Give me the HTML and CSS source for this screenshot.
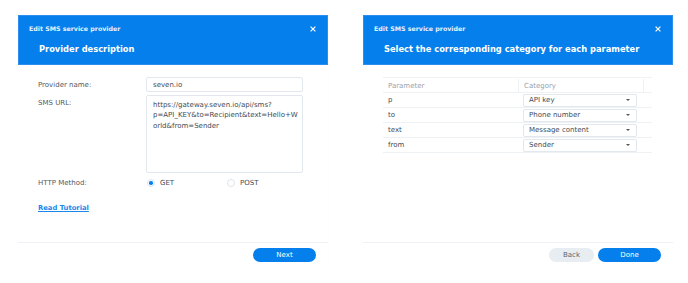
FILE: index.html
```html
<!DOCTYPE html>
<html>
<head>
<meta charset="utf-8">
<link rel="stylesheet" href="styles.css">
</head>
<body>
<div class="page">
  <div class="dialog">
    <div class="header">
      <div class="topbar">
        <span class="small-title">Edit SMS service provider</span>
        <svg class="close" viewBox="0 0 10 10" width="7" height="7"><path d="M1 1L9 9M9 1L1 9" stroke="#fff" stroke-width="2"/></svg>
      </div>
      <div class="big-title">Provider description</div>
    </div>
    <div class="body form">
      <div class="row">
        <div class="label">Provider name:</div>
        <div class="input">seven.io</div>
      </div>
      <div class="row">
        <div class="label">SMS URL:</div>
        <div class="textarea">https://gateway.seven.io/api/sms?<br>p=API_KEY&amp;to=Recipient&amp;text=Hello+W<br>orld&amp;from=Sender</div>
      </div>
      <div class="row method">
        <div class="label">HTTP Method:</div>
        <div class="radios">
          <span class="radio"><span class="dot on"></span>GET</span>
          <span class="radio"><span class="dot"></span>POST</span>
        </div>
      </div>
      <a class="link">Read Tutorial</a>
    </div>
    <div class="footer">
      <button class="btn primary">Next</button>
    </div>
  </div>

  <div class="dialog">
    <div class="header">
      <div class="topbar">
        <span class="small-title">Edit SMS service provider</span>
        <svg class="close" viewBox="0 0 10 10" width="7" height="7"><path d="M1 1L9 9M9 1L1 9" stroke="#fff" stroke-width="2"/></svg>
      </div>
      <div class="big-title">Select the corresponding category for each parameter</div>
    </div>
    <div class="body">
      <div class="table">
        <div class="trow thead">
          <div class="c1">Parameter</div>
          <div class="c2">Category</div>
          <div class="c3"></div>
        </div>
        <div class="trow">
          <div class="c1">p</div>
          <div class="c2"><div class="select">API key<span class="caret"></span></div></div>
          <div class="c3"></div>
        </div>
        <div class="trow">
          <div class="c1">to</div>
          <div class="c2"><div class="select">Phone number<span class="caret"></span></div></div>
          <div class="c3"></div>
        </div>
        <div class="trow">
          <div class="c1">text</div>
          <div class="c2"><div class="select">Message content<span class="caret"></span></div></div>
          <div class="c3"></div>
        </div>
        <div class="trow">
          <div class="c1">from</div>
          <div class="c2"><div class="select">Sender<span class="caret"></span></div></div>
          <div class="c3"></div>
        </div>
      </div>
    </div>
    <div class="footer">
      <button class="btn secondary">Back</button>
      <button class="btn primary">Done</button>
    </div>
  </div>
</div>
</body>
</html>
```

FILE: styles.css
```css
html, body {
  margin: 0;
  padding: 0;
  background: #fff;
}
body {
  font-family: "DejaVu Sans", Verdana, sans-serif;
  font-size: 7px;
  color: #414b55;
}
.page {
  display: flex;
  gap: 35px;
  padding: 15px 0 0 18px;
}
.dialog {
  width: 310px;
  height: 252px;
  display: flex;
  flex-direction: column;
  box-shadow: 0 0 1px rgba(0,0,0,0.04);
}
.header {
  background: #057feb;
  height: 50px;
  color: #fff;
  box-sizing: border-box;
  border: 1px solid #2c8ff0;
}
.topbar {
  display: flex;
  justify-content: space-between;
  align-items: center;
  padding: 5px 11px 0 10px;
  height: 15px;
}
.small-title {
  font-weight: bold;
  font-size: 6.3px;
  color: #e8f2fd;
}
.close {
  width: 6px;
  height: 6px;
}
.big-title {
  font-weight: bold;
  font-size: 8.3px;
  padding: 8px 0 0 20px;
}
.body {
  flex: 1;
  padding: 12px 0 0 20px;
}
.form .row {
  display: flex;
  margin-bottom: 3px;
}
.label {
  width: 108px;
  padding-top: 4px;
  color: #505a64;
}
.input {
  width: 157px;
  height: 15px;
  box-sizing: border-box;
  border: 1px solid #e3e8ee;
  border-radius: 2px;
  padding: 3px 6px;
  color: #414b55;
}
.textarea {
  width: 157px;
  height: 78px;
  box-sizing: border-box;
  border: 1px solid #e3e8ee;
  border-radius: 2px;
  padding: 4px 6px;
  line-height: 10.3px;
}
.form .row.method {
  margin-top: 6px;
  align-items: center;
}
.form .row.method .label {
  padding-top: 0;
}
.radios {
  display: flex;
  margin-left: 1px;
}
.radio {
  display: flex;
  align-items: center;
  width: 80px;
  gap: 5px;
}
.dot {
  width: 8px;
  height: 8px;
  border-radius: 50%;
  border: 1px solid #dfe4ea;
  box-sizing: border-box;
  position: relative;
}
.dot.on {
  border-color: #d5e6fa;
}
.dot.on::after {
  content: "";
  position: absolute;
  left: 1.25px;
  top: 1.25px;
  width: 3.5px;
  height: 3.5px;
  border-radius: 50%;
  background: #057feb;
}
.link {
  display: inline-block;
  margin-top: 14px;
  color: #1a88ec;
  text-decoration: underline;
  font-weight: bold;
  font-size: 6.8px;
}
.footer {
  border-top: 1px solid #eef1f5;
  height: 25px;
  box-sizing: border-box;
  display: flex;
  justify-content: flex-end;
  align-items: flex-start;
  gap: 4px;
  padding: 5px 12px 0 0;
}
.btn {
  font-family: inherit;
  font-size: 7px;
  border: none;
  border-radius: 8px;
  height: 14px;
  padding: 0;
}
.btn.primary {
  width: 63px;
  background: #057feb;
  color: #fff;
}
.btn.secondary {
  width: 45px;
  background: #e8edf2;
  color: #5a6470;
}
.table {
  width: 269px;
}
.trow {
  display: flex;
  height: 15px;
  border-bottom: 1px solid #eff2f5;
  align-items: center;
  box-sizing: border-box;
}
.thead {
  border-top: 1px solid #eff2f5;
  height: 16px;
  color: #9aa2ab;
  padding-top: 1px;
}
.c1 {
  width: 135px;
  padding-left: 5px;
  box-sizing: border-box;
}
.c2 {
  width: 125px;
  padding-left: 5px;
  box-sizing: border-box;
  height: 100%;
  display: flex;
  align-items: center;
}
.c3 {
  flex: 1;
  height: 100%;
}
.thead .c2, .thead .c3 {
  border-left: 1px solid #eff2f5;
}
.select {
  width: 114px;
  height: 13px;
  box-sizing: border-box;
  border: 1px solid #e3e8ee;
  border-radius: 2px;
  padding: 0 6px 0 5px;
  display: flex;
  align-items: center;
  justify-content: space-between;
  color: #414b55;
}
.caret {
  width: 0;
  height: 0;
  border-left: 2.5px solid transparent;
  border-right: 2.5px solid transparent;
  border-top: 2.5px solid #555;
}
```
